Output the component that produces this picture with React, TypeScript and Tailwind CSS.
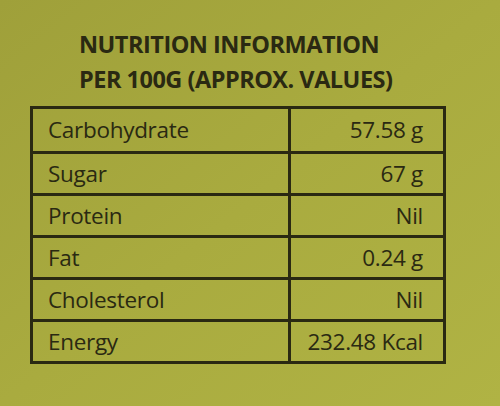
const rows = [
  ["Carbohydrate", "57.58 g"],
  ["Sugar", "67 g"],
  ["Protein", "Nil"],
  ["Fat", "0.24 g"],
  ["Cholesterol", "Nil"],
  ["Energy", "232.48 Kcal"],
];

export default function App() {
  return (
    <div
      className="w-[500px] h-[406px] overflow-hidden bg-gradient-to-br from-[#9fa03a] via-[#a9ab3f] to-[#b0b344] text-[#2a2912]"
      style={{ fontFamily: '"Open Sans", "Liberation Sans", sans-serif' }}
    >
      <div className="pl-[79px] pt-[27px] font-bold text-[23.5px] leading-[35px] tracking-[-0.5px]">
        <div>NUTRITION INFORMATION</div>
        <div>PER 100G (APPROX. VALUES)</div>
      </div>
      <div className="ml-[30px] mt-[9px] w-[416px] border-[3px] border-[#2a2912]">
        {rows.map(([name, value], i) => (
          <div
            key={name}
            className={`flex h-[42px] items-center text-[22.5px] font-medium tracking-[-0.3px] ${i > 0 ? "border-t-[3px] border-[#2a2912]" : ""}`}
          >
            <div className="w-[258px] h-full flex items-center pl-[15px] border-r-[3px] border-[#2a2912]">
              {name}
            </div>
            <div className="flex-1 text-right pr-[20px]">{value}</div>
          </div>
        ))}
      </div>
    </div>
  );
}
